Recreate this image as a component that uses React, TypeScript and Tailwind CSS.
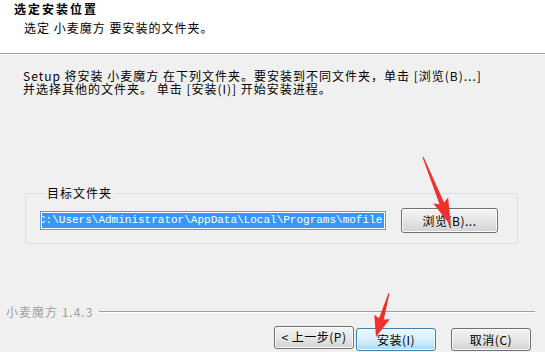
import React from "react";

const FONT = { fontFamily: '"Noto Sans CJK SC", "Noto Sans", sans-serif' };

function WinButton({ label, primary = false }: { label: string; primary?: boolean }) {
  return (
    <button
      className={
        primary
          ? "h-[23px] w-[80px] rounded-[3px] border border-[#3c7fb1] bg-gradient-to-b from-[#eaf6fd] via-[#d9f0fc] to-[#a7d9f5] text-[12px] leading-none tracking-[0.5px] text-black shadow-[inset_0_0_0_1px_#f4fbff]"
          : "h-[23px] w-[80px] rounded-[3px] border border-[#707070] bg-gradient-to-b from-[#f4f4f4] via-[#e6e6e6] to-[#d2d2d2] text-[12px] leading-none tracking-[0.5px] text-black shadow-[inset_0_0_0_1px_#fcfcfc]"
      }
    >
      {label}
    </button>
  );
}

export default function App() {
  return (
    <div
      className="relative flex h-[352px] w-[545px] flex-col overflow-hidden bg-[#f0f0f0] text-black"
      style={FONT}
    >
      {/* header */}
      <div className="h-[54px] border-b border-[#a0a0a0] bg-white pl-[14px] pt-[2px]">
        <div className="text-[12px] font-bold leading-[14px] tracking-[2px]">选定安装位置</div>
        <div className="mt-[5px] pl-[10px] text-[12px] leading-[14px] tracking-[1px]">
          选定 小麦魔方 要安装的文件夹。
        </div>
      </div>
      <div className="h-px bg-white" />

      {/* body */}
      <div className="flex-1 px-[23px] pt-[14px]">
        <p className="text-[12px] leading-[13px] tracking-[1px]">
          Setup 将安装 小麦魔方 在下列文件夹。要安装到不同文件夹，单击 [浏览(B)...]
          <br />
          并选择其他的文件夹。 单击 [安装(I)] 开始安装进程。
        </p>

        <fieldset className="ml-[2px] mt-[91px] w-[493px] rounded-[2px] border border-[#d5dfe5] pb-[10px] pl-[14px] pr-[19px] pt-[8px]">
          <legend className="ml-[6px] px-[1px] text-[12px] leading-[14px] tracking-[1px]">目标文件夹</legend>
          <div className="flex items-center">
            <div className="h-[19px] w-[346px] overflow-hidden border border-[#569de5] bg-white p-px">
              <div className="h-full overflow-hidden bg-[#3399ff]">
                <span
                  className="-ml-[3px] block whitespace-nowrap text-[11px] leading-[15px] text-white"
                  style={{ fontFamily: '"Liberation Mono", monospace' }}
                >
                  C:\Users\Administrator\AppData\Local\Programs\mofile
                </span>
              </div>
            </div>
            <button className="ml-[15px] h-[25px] w-[97px] rounded-[3px] border border-[#707070] bg-gradient-to-b from-[#f4f4f4] via-[#e6e6e6] to-[#d2d2d2] text-[12px] leading-none tracking-[0.5px] shadow-[inset_0_0_0_1px_#fcfcfc]">
              浏览(B)...
            </button>
          </div>
        </fieldset>
      </div>

      {/* footer */}
      <div className="pb-px">
        <div className="flex h-[14px] items-center pl-[6px] pr-[10px]">
          <span className="text-[12px] leading-[14px] tracking-[1px] text-[#a0a0a0]">小麦魔方 1.4.3</span>
          <div className="ml-[6px] flex-1 border-t border-b border-t-[#a0a0a0] border-b-white" />
        </div>
        <div className="mt-[7px] flex justify-end pr-[14px]">
          <WinButton label="< 上一步(P)" />
          <div className="ml-[2px]">
            <WinButton label="安装(I)" primary />
          </div>
          <div className="ml-[15px]">
            <WinButton label="取消(C)" />
          </div>
        </div>
      </div>

      {/* red annotation arrows */}
      <svg className="pointer-events-none absolute left-0 top-0" width="545" height="352">
        <polygon
          fill="#f0302a"
          points="422.5,157.2 423.5,156.8 444.1,202.4 448.1,197.5 451,226 433.3,203.5 439.5,204.2"
        />
        <polygon
          fill="#f0302a"
          points="388.5,293 389.5,293.3 383.8,319.6 389.7,319.3 376,337 374.3,314.7 379,318.2"
        />
      </svg>
    </div>
  );
}
